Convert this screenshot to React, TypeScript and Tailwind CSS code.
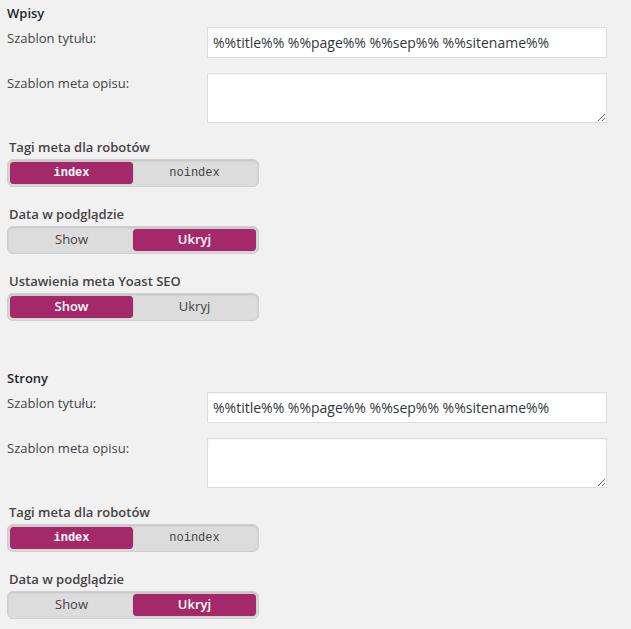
import React from 'react';

const TITLE_TEMPLATE = '%%title%% %%page%% %%sep%% %%sitename%%';

interface ToggleProps {
    label: string;
    options: [string, string];
    active: 0 | 1;
    mono?: boolean;
    first?: boolean;
}

const Toggle: React.FC<ToggleProps> = ({ label, options, active, mono, first }) => {
    return (
        <div className={first ? 'mt-[14px] pl-[2px]' : 'mt-[17px] pl-[2px]'}>
            <div className="h-[20px] leading-[20px] text-[13px] font-semibold text-[#444]">{label}</div>
            <div className="mt-[2px] -ml-[2px] flex w-[252px] h-[28px] rounded-[6px] border border-[#cfcfcf] bg-[#dcdcdc] p-[2px] shadow-[inset_0_1px_2px_rgba(0,0,0,0.12)]">
                {options.map((opt, i) => (
                    <div
                        key={opt}
                        className={`flex-1 flex items-center justify-center rounded-[4px] ${
                            i === active ? 'bg-[#a4286a] text-white font-semibold shadow-[0_0_1px_rgba(0,0,0,0.4)]' : 'text-[#444]'
                        } ${mono ? "font-['Liberation_Mono',monospace] text-[12px]" : 'text-[13px]'}`}
                    >
                        {opt}
                    </div>
                ))}
            </div>
        </div>
    );
};

interface SectionProps {
    title: string;
    children?: React.ReactNode;
}

const Section: React.FC<SectionProps> = ({ title, children }) => {
    return (
        <div>
            <h3 className="h-[20px] leading-[20px] text-[13px] font-semibold text-[#23282d]">{title}</h3>
            <div className="mt-[4px] flex">
                <label className="w-[200px] leading-[20px] pt-[1px] text-[13px] text-[#444]">Szablon tytułu:</label>
                <input
                    type="text"
                    defaultValue={TITLE_TEMPLATE}
                    className="w-[400px] h-[31px] border border-[#ddd] bg-white px-[5px] text-[14px] text-[#32373c] outline-none shadow-[inset_0_1px_2px_rgba(0,0,0,0.04)]"
                />
            </div>
            <div className="mt-[15px] flex">
                <label className="w-[200px] leading-[20px] text-[13px] text-[#444]">Szablon meta opisu:</label>
                <textarea className="w-[400px] h-[50px] border border-[#ddd] bg-white outline-none shadow-[inset_0_1px_2px_rgba(0,0,0,0.04)]" />
            </div>
            {children}
        </div>
    );
};

export default function App() {
    return (
        <div className="w-[631px] h-[629px] overflow-hidden bg-[#f1f1f1] pl-[7px] pt-[3px] font-['Open_Sans',sans-serif]">
            <Section title="Wpisy">
                <Toggle first label="Tagi meta dla robotów" options={['index', 'noindex']} active={0} mono />
                <Toggle label="Data w podglądzie" options={['Show', 'Ukryj']} active={1} />
                <Toggle label="Ustawienia meta Yoast SEO" options={['Show', 'Ukryj']} active={0} />
            </Section>
            <div className="mt-[47px]">
                <Section title="Strony">
                    <Toggle first label="Tagi meta dla robotów" options={['index', 'noindex']} active={0} mono />
                    <Toggle label="Data w podglądzie" options={['Show', 'Ukryj']} active={1} />
                </Section>
            </div>
        </div>
    );
}
